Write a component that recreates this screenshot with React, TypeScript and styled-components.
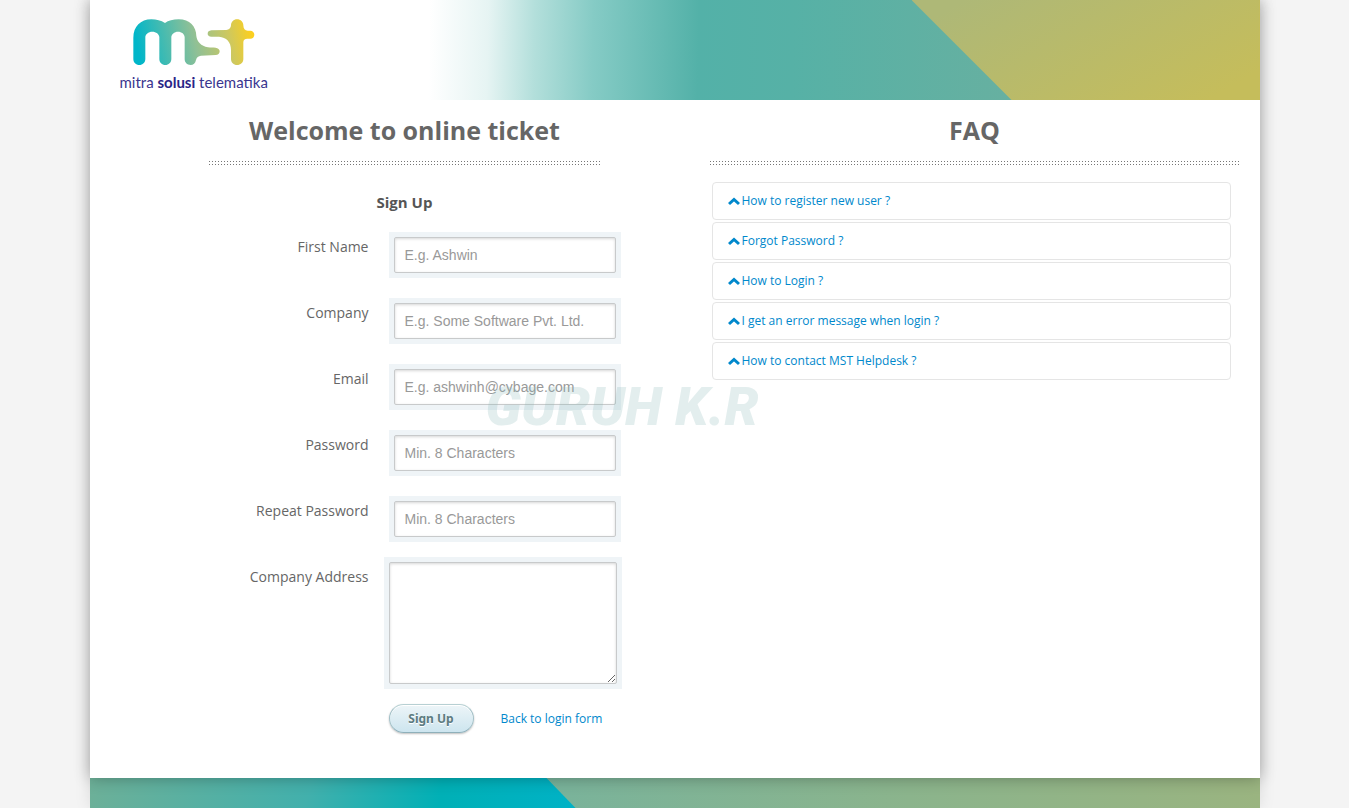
import React from "react";
import styled, { createGlobalStyle } from "styled-components";

const GlobalStyle = createGlobalStyle`
  *, *::before, *::after { box-sizing: border-box; }
  body {
    margin: 0;
    background: #f4f4f4;
    color: #666;
    font-family: "Open Sans", "Noto Sans", sans-serif;
    font-size: 14px;
    line-height: 20px;
  }
  a { color: #08c; text-decoration: none; }
  a:hover { text-decoration: underline; }
`;

const Page = styled.div`
  max-width: 1170px;
  margin: 0 auto;
  box-shadow: 0 0 15px rgba(0, 0, 0, 0.1);
`;

const Panel = styled.div`
  position: relative;
  z-index: 1;
  background: #fff;
  box-shadow: 0 0 15px rgba(0, 0, 0, 0.3);
`;

const Header = styled.header`
  position: relative;
  display: flex;
  height: 100px;
  padding: 19px 30px 0;
  background: linear-gradient(
    91deg,
    #fff 29%,
    #e6f4f3 34%,
    #b3dfdb 38%,
    #85cbc5 43%,
    #53b1a8 52%,
    #56b1a6 60%,
    #68b0a0 80%,
    #c6bd5b 90%
  );
  &::after {
    content: "";
    position: absolute;
    inset: 0 0 0 auto;
    width: 348px;
    background: linear-gradient(150deg, #aeb877 10%, #c5bd5b 90%);
    clip-path: polygon(0 0, 100% 0, 100% 100%, 100px 100%);
  }
`;

const Logo = styled.a`
  display: flex;
  flex-direction: column;
  color: #3a368f;
  font-family: Lato, sans-serif;
  font-size: 15px;
  line-height: 20px;
  svg { display: block; margin: 0 0 7px 13px; }
  b { color: #2a2487; }
`;

const Main = styled.main`
  display: grid;
  grid-template-columns: minmax(0, 1fr) minmax(0, 530px);
  padding: 14px 20px 45px 0;
  @media (max-width: 1000px) {
    grid-template-columns: minmax(0, 1fr);
    padding-left: 20px;
  }
`;

const Column = styled.section``;

const Heading = styled.div<{ $inset?: boolean }>`
  max-width: ${(p) => (p.$inset ? "511px" : "none")};
  padding-left: ${(p) => (p.$inset ? "119px" : "0")};
  h1 {
    margin: 0;
    color: #666;
    font-size: 25px;
    font-weight: 700;
    line-height: 32px;
    text-align: center;
  }
`;

const Divider = styled.hr`
  height: 4px;
  margin: 15px 0 17px;
  border: 0;
  background-image: linear-gradient(to right, #777 1px, transparent 1px),
    linear-gradient(to right, #777 1px, transparent 1px);
  background-position: top left, bottom left;
  background-size: 3px 1px;
  background-repeat: repeat-x;
`;

const Form = styled.form`
  display: flex;
  flex-direction: column;
  gap: 20px;
`;

const FormTitle = styled.h2`
  margin: 10px 0 0 287px;
  color: #555;
  font-size: 15px;
  line-height: 20px;
`;

const Row = styled.div<{ $area?: boolean }>`
  display: grid;
  grid-template-columns: 279px minmax(0, 1fr);
  column-gap: ${(p) => (p.$area ? "15px" : "20px")};
  margin: ${(p) => (p.$area ? "-5px 0" : "0")};
  label {
    padding-top: ${(p) => (p.$area ? "10px" : "5px")};
    text-align: right;
  }
`;

const FieldFrame = styled.div`
  justify-self: start;
  padding: 5px;
  background: #eff4f7;
`;

const fieldLook = `
  display: block;
  border: 1px solid #c8cacb;
  border-radius: 2px;
  background: #fff;
  box-shadow: inset 0 1px 3px rgba(0, 0, 0, 0.16);
  color: #555;
  font-family: "Liberation Sans", sans-serif;
  font-size: 14px;
  line-height: 20px;
  outline: 0;
`;

const TextField = styled.input`
  ${fieldLook}
  width: 222px;
  height: 36px;
  padding: 0 10px;
  &::placeholder { color: #999; opacity: 1; }
`;

const AddressField = styled.textarea`
  ${fieldLook}
  width: 228px;
  height: 122px;
  padding: 8px 10px;
  resize: both;
`;

const Actions = styled.div`
  display: flex;
  align-items: center;
  gap: 27px;
  padding-left: 299px;
  font-size: 12px;
`;

const SubmitButton = styled.button`
  width: 85px;
  height: 29px;
  padding: 0;
  border: 1px solid #a3c0c7;
  border-top-color: #b7d0d3;
  border-bottom-color: #8fb0ba;
  border-radius: 15px;
  background: linear-gradient(#edf5f8, #cde5ef);
  box-shadow: 0 1px 2px rgba(0, 0, 0, 0.25), inset 0 1px 0 #fff;
  color: #5c7b80;
  font-family: "Noto Sans", sans-serif;
  font-size: 12px;
  font-weight: 700;
  text-shadow: 0 1px 0 #fff;
  cursor: pointer;
`;

const FaqList = styled.ul`
  display: flex;
  flex-direction: column;
  gap: 2px;
  margin: 0;
  padding: 0 9px 0 2px;
  list-style: none;
`;

const FaqItem = styled.li`
  padding: 8px 15px;
  border: 1px solid #e5e5e5;
  border-radius: 4px;
  font-size: 12px;
  a { display: flex; align-items: center; gap: 2px; }
`;

const Watermark = styled.div`
  position: absolute;
  top: 372px;
  left: 396px;
  color: #82b4b4;
  font-family: Roboto, sans-serif;
  font-size: 54px;
  font-style: italic;
  font-weight: 900;
  line-height: 70px;
  white-space: nowrap;
  opacity: 0.22;
  pointer-events: none;
`;

const Footer = styled.footer`
  position: relative;
  height: 30px;
  background: linear-gradient(to right, #79b39b 39%, #8bb48c 70%, #9ab480);
  &::after {
    content: "";
    position: absolute;
    inset: 0 auto 0 0;
    width: 486px;
    background: linear-gradient(105deg, #6db098 0, #42b0ac 45%, #00b0b6 72%, #00b2c6);
    clip-path: polygon(0 0, 457px 0, 100% 100%, 0 100%);
  }
`;

const fields = [
  { id: "first-name", label: "First Name", type: "text", placeholder: "E.g. Ashwin" },
  { id: "company", label: "Company", type: "text", placeholder: "E.g. Some Software Pvt. Ltd." },
  { id: "email", label: "Email", type: "email", placeholder: "E.g. ashwinh@cybage.com" },
  { id: "password", label: "Password", type: "password", placeholder: "Min. 8 Characters" },
  { id: "repeat", label: "Repeat Password", type: "password", placeholder: "Min. 8 Characters" },
];

const questions = [
  "How to register new user ?",
  "Forgot Password ?",
  "How to Login ?",
  "I get an error message when login ?",
  "How to contact MST Helpdesk ?",
];

function LogoMark() {
  return (
    <svg width="122" height="46" viewBox="160 57 366 138" aria-hidden="true">
      <defs>
        <linearGradient id="mst" gradientUnits="userSpaceOnUse" x1="175" y1="150" x2="510" y2="80">
          <stop offset="0" stopColor="#00b6c9" />
          <stop offset="0.5" stopColor="#8fc096" />
          <stop offset="0.8" stopColor="#cdc860" />
          <stop offset="1" stopColor="#fbcf20" />
        </linearGradient>
      </defs>
      <g fill="url(#mst)">
        <path d="M161 177V113C161 80 183 58 215 58C231 58 244 62 256 69C266 62 280 58 297 58C330 58 350 80 350 108C352 125 364 138 385 142C393 143 400 142 408 143C415 144 420 148 420 154C420 161 415 165 408 165L364 167C356 168 351 172 349 180C347 190 341 195 333 195C322 195 315 187 315 178V112C315 102 306 95 295 95C284 95 275 103 275 112V177C275 188 267 195 257 195C247 195 239 188 239 177V112C239 102 229 95 218 95C206 95 197 103 197 112V177C197 188 189 195 179 195C169 195 161 188 161 177Z" />
        <path d="M454 177V150C454 125 440 112 418 110L395 110C388 109 384 106 384 101C384 95 388 92 395 91L440 90C448 89 454 84 454 76C454 66 462 58 472 58C483 58 491 66 491 76C491 86 496 92 504 92H512C519 92 524 97 524 104C524 111 519 116 512 116H503C495 116 491 120 491 127V177C491 188 483 195 472 195C462 195 454 188 454 177Z" />
      </g>
    </svg>
  );
}

function ChevronUp() {
  return (
    <svg width="12" height="12" viewBox="0 0 12 12" aria-hidden="true">
      <path d="M1 9L6 4.500L11 9" fill="none" stroke="#08c" strokeWidth="3" />
    </svg>
  );
}

export default function App() {
  return (
    <Page>
      <GlobalStyle />
      <Panel>
        <Header>
          <Logo href="#">
            <LogoMark />
            <span>mitra <b>solusi</b> telematika</span>
          </Logo>
        </Header>
        <Main>
          <Column>
            <Heading $inset>
              <h1>Welcome to online ticket</h1>
              <Divider />
            </Heading>
            <Form onSubmit={(e) => e.preventDefault()}>
              <FormTitle>Sign Up</FormTitle>
              {fields.map((f) => (
                <Row key={f.id}>
                  <label htmlFor={f.id}>{f.label}</label>
                  <FieldFrame>
                    <TextField id={f.id} type={f.type} placeholder={f.placeholder} />
                  </FieldFrame>
                </Row>
              ))}
              <Row $area>
                <label htmlFor="address">Company Address</label>
                <FieldFrame>
                  <AddressField id="address" />
                </FieldFrame>
              </Row>
              <Actions>
                <SubmitButton type="submit">Sign Up</SubmitButton>
                <a href="#login">Back to login form</a>
              </Actions>
            </Form>
          </Column>
          <Column>
            <Heading>
              <h1>FAQ</h1>
              <Divider />
            </Heading>
            <FaqList>
              {questions.map((q) => (
                <FaqItem key={q}>
                  <a href="#faq"><ChevronUp />{q}</a>
                </FaqItem>
              ))}
            </FaqList>
          </Column>
        </Main>
        <Watermark>GURUH K.R</Watermark>
      </Panel>
      <Footer />
    </Page>
  );
}
